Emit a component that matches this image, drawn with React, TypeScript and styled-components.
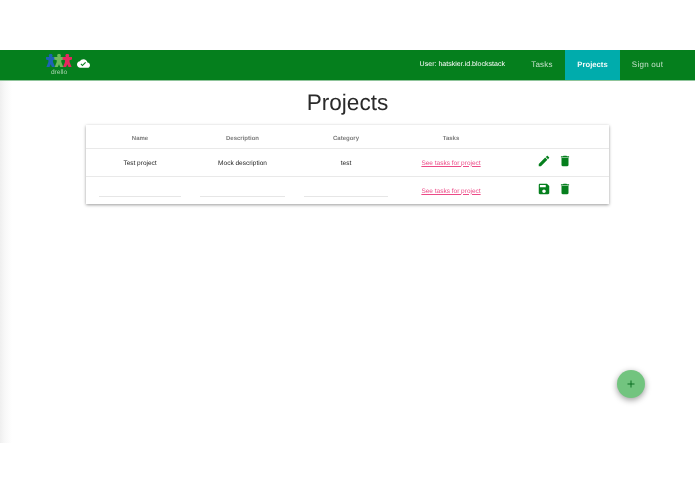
import React from "react";
import styled, { createGlobalStyle } from "styled-components";

const Global = createGlobalStyle`
  html, body { margin: 0; padding: 0; background: #fff; }
  body {
    font-family: "Liberation Sans", Arial, sans-serif;
    text-rendering: geometricPrecision;
  }
`;

const Page = styled.div`
  width: 695px;
  height: 494px;
  padding-top: 50px;
  box-sizing: border-box;
  background: #fff;
  overflow: hidden;
  display: flex;
  flex-direction: column;
  will-change: transform;
`;

const NavBar = styled.header`
  height: 31px;
  flex: none;
  background: #057f1d;
  display: flex;
  align-items: stretch;
  padding-left: 46px;
  border-bottom: 1px solid #8fc49a;
  box-sizing: border-box;
`;

const Brand = styled.div`
  width: 26px;
  display: flex;
  flex-direction: column;
  align-items: center;
  padding-top: 4px;
`;

const BrandName = styled.span`
  font-size: 6.6px;
  line-height: 8px;
  margin-top: 2px;
  color: #a9d3b0;
`;

const CloudIcon = styled.svg`
  width: 13px;
  height: 13px;
  margin: 7px 0 0 5px;
  fill: #fff;
`;

const NavRight = styled.nav`
  margin-left: auto;
  display: flex;
  align-items: stretch;
`;

const UserLabel = styled.span`
  font-size: 7.05px;
  color: #fff;
  display: flex;
  align-items: center;
  padding-bottom: 2px;
  margin-right: 14px;
`;

const NavItem = styled.a<{ $active?: boolean; $w: number }>`
  font-size: ${(p) => (p.$active ? 7.7 : 8)}px;
  letter-spacing: ${(p) => (p.$active ? 0 : 0.25)}px;
  font-weight: ${(p) => (p.$active ? 700 : 400)};
  color: ${(p) => (p.$active ? "#f2fbfa" : "#c4e0c9")};
  background: ${(p) => (p.$active ? "#00acac" : "transparent")};
  width: ${(p) => p.$w}px;
  display: flex;
  align-items: center;
  justify-content: center;
  padding-bottom: 2px;
  box-sizing: border-box;
`;

const EndGap = styled.div`
  width: 20px;
`;

const Main = styled.main`
  height: 362px;
  flex: none;
  background: linear-gradient(to right, #efefef 0, #f8f8f8 5px, #fff 12px);
  display: flex;
  flex-direction: column;
  align-items: center;
`;

const Title = styled.h1`
  margin: 8px 0 0;
  font-size: 22.6px;
  line-height: 28px;
  font-weight: 400;
  color: #2a2a2a;
`;

const Card = styled.section`
  margin-top: 8px;
  width: 523px;
  background: #fff;
  box-shadow: 0 1px 3px rgba(0, 0, 0, 0.4);
`;

const Row = styled.div<{ $h: number; $last?: boolean }>`
  display: grid;
  grid-template-columns: 108px 97px 110px 100px 108px;
  height: ${(p) => p.$h}px;
  align-items: center;
  box-sizing: border-box;
  border-bottom: ${(p) => (p.$last ? "none" : "1px solid #e9e9e9")};
`;

const HeadCell = styled.div`
  font-size: 6px;
  font-weight: 700;
  color: #7c7c7c;
  text-align: center;
  padding-top: 4px;
`;

const Cell = styled.div`
  font-size: 6.5px;
  color: #222;
  text-align: center;
  padding-top: 2px;
`;

const TaskLink = styled.a`
  font-size: 6.5px;
  color: #ec4a87;
  text-decoration: underline;
  text-align: center;
  padding-top: 1px;
`;

const Underline = styled.div<{ $inset: number }>`
  height: 1px;
  background: #e6e6e6;
  margin: 11px ${(p) => p.$inset}px 0 ${(p) => p.$inset}px;
`;

const Actions = styled.div`
  display: flex;
  align-items: center;
  gap: 7px;
  padding: 0 0 4px 36px;
`;

const ActionIcon = styled.svg`
  width: 14px;
  height: 14px;
  fill: #057f1d;
`;

const Fab = styled.button`
  position: absolute;
  left: 617px;
  top: 370px;
  width: 28px;
  height: 28px;
  border: none;
  padding: 0;
  border-radius: 50%;
  background: #72c47f;
  box-shadow: 0 2px 6px rgba(0, 0, 0, 0.4);
  display: flex;
  align-items: center;
  justify-content: center;
`;

const FabIcon = styled.svg`
  width: 12px;
  height: 12px;
  fill: #0a6e22;
`;

const edit =
  "M3 17.25V21h3.75L17.81 9.94l-3.75-3.75L3 17.25zM20.71 7.04c.39-.39.39-1.02 0-1.41l-2.34-2.34c-.39-.39-1.02-.39-1.41 0l-1.83 1.83 3.75 3.75 1.83-1.83z";
const del = "M6 19c0 1.1.9 2 2 2h8c1.1 0 2-.9 2-2V7H6v12zM19 4h-3.5l-1-1h-5l-1 1H5v2h14V4z";
const save =
  "M17 3H5c-1.11 0-2 .9-2 2v14c0 1.1.89 2 2 2h14c1.1 0 2-.9 2-2V7l-4-4zm-5 16c-1.66 0-3-1.34-3-3s1.34-3 3-3 3 1.34 3 3-1.34 3-3 3zm3-10H5V5h10v4z";
const cloud =
  "M19.35 10.04C18.67 6.59 15.64 4 12 4 9.11 4 6.6 5.64 5.35 8.04 2.34 8.36 0 10.91 0 14c0 3.31 2.69 6 6 6h13c2.76 0 5-2.24 5-5 0-2.64-2.05-4.78-4.65-4.96zM10 17l-3.5-3.5 1.41-1.41L10 14.17 15.18 9l1.41 1.41L10 17z";

const Person = ({ x, color }: { x: number; color: string }) => (
  <g transform={`translate(${x} 0)`} fill={color}>
    <circle cx="4.7" cy="1.7" r="1.9" />
    <path d="M0 3 L9.4 3 L9.4 5.4 L6.9 6.2 L7 8 L9 13 L5.9 13 L4.7 10.2 L3.5 13 L0.4 13 L2.4 8 L2.5 6.2 L0 5.4 Z" />
  </g>
);

const Logo = () => (
  <svg width="26" height="13" viewBox="0 0 26 13">
    <Person x={0} color="#1d62b5" />
    <Person x={8.3} color="#6dbb5a" />
    <Person x={16.6} color="#e6285f" />
  </svg>
);

const Icon = ({ d }: { d: string }) => (
  <ActionIcon viewBox="0 0 24 24">
    <path d={d} />
  </ActionIcon>
);

export default function App() {
  return (
    <>
      <Global />
      <Page>
        <NavBar>
          <Brand>
            <Logo />
            <BrandName>drello</BrandName>
          </Brand>
          <CloudIcon viewBox="0 0 24 24">
            <path d={cloud} />
          </CloudIcon>
          <NavRight>
            <UserLabel>User: hatskier.id.blockstack</UserLabel>
            <NavItem $w={46}>Tasks</NavItem>
            <NavItem $active $w={55}>Projects</NavItem>
            <NavItem $w={55}>Sign out</NavItem>
            <EndGap />
          </NavRight>
        </NavBar>
        <Main>
          <Title>Projects</Title>
          <Card>
            <Row $h={24}>
              <HeadCell>Name</HeadCell>
              <HeadCell>Description</HeadCell>
              <HeadCell>Category</HeadCell>
              <HeadCell>Tasks</HeadCell>
              <HeadCell />
            </Row>
            <Row $h={28}>
              <Cell>Test project</Cell>
              <Cell>Mock description</Cell>
              <Cell>test</Cell>
              <TaskLink href="#">See tasks for project</TaskLink>
              <Actions>
                <Icon d={edit} />
                <Icon d={del} />
              </Actions>
            </Row>
            <Row $h={27} $last>
              <Underline $inset={13} />
              <Underline $inset={6} />
              <Underline $inset={13} />
              <TaskLink href="#">See tasks for project</TaskLink>
              <Actions>
                <Icon d={save} />
                <Icon d={del} />
              </Actions>
            </Row>
          </Card>
        </Main>
        <Fab aria-label="Add">
          <FabIcon viewBox="0 0 24 24">
            <path d="M19 13h-6v6h-2v-6H5v-2h6V5h2v6h6v2z" />
          </FabIcon>
        </Fab>
      </Page>
    </>
  );
}
